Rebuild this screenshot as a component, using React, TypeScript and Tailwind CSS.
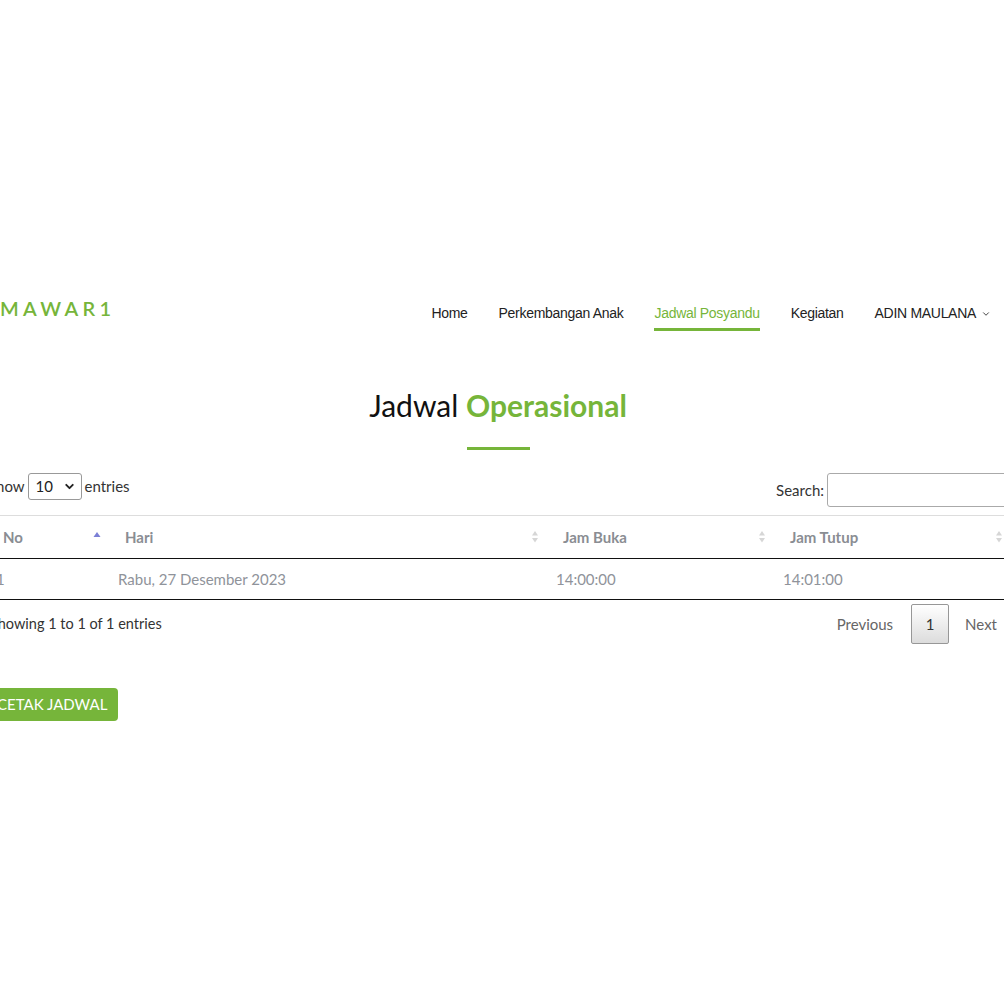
import { ChevronDown } from "lucide-react";

const navLinks = [
  { label: "Home", active: false },
  { label: "Perkembangan Anak", active: false },
  { label: "Jadwal Posyandu", active: true },
  { label: "Kegiatan", active: false },
];

type SortState = "asc" | "none";

function SortIcon({ state }: { state: SortState }) {
  if (state === "asc") {
    return (
      <svg width="8" height="14" viewBox="0 0 8 14" className="shrink-0">
        <path d="M4 2 L7.5 7 L0.5 7 Z" fill="#7b7fd6" />
      </svg>
    );
  }
  return (
    <svg width="8" height="14" viewBox="0 0 8 14" className="shrink-0">
      <path d="M4 1 L7 5.5 L1 5.5 Z" fill="#d6d6d6" />
      <path d="M4 12.5 L7 8 L1 8 Z" fill="#d6d6d6" />
    </svg>
  );
}

const columns: { label: string; width: string; sort: SortState }[] = [
  { label: "No", width: "w-[122px]", sort: "asc" },
  { label: "Hari", width: "w-[438px]", sort: "none" },
  { label: "Jam Buka", width: "w-[227px]", sort: "none" },
  { label: "Jam Tutup", width: "w-[237px]", sort: "none" },
];

const rows = [["1", "Rabu, 27 Desember 2023", "14:00:00", "14:01:00"]];

export default function App() {
  return (
    <div className="h-[1004px] w-[1004px] overflow-hidden bg-white font-['Lato',sans-serif]">
      <div className="ml-[-14px] w-[1024px]">
        {/* navbar */}
        <header className="flex items-start justify-between pt-[298px] pr-[19px]">
          <a className="ml-[14px] text-[20px] font-semibold leading-[20px] tracking-[4.3px] text-[#76b53a]">
            MAWAR1
          </a>
          <nav className="mt-[5px] flex gap-[31px] font-['Liberation_Sans',Arial,sans-serif] text-[14px] tracking-[-0.3px]">
            {navLinks.map((link) => (
              <a
                key={link.label}
                className={
                  link.active
                    ? "border-b-[3px] border-[#76b53a] pb-[5px] leading-5 text-[#76b53a]"
                    : "border-b-[3px] border-transparent pb-[5px] leading-5 text-[#222]"
                }
              >
                {link.label}
              </a>
            ))}
            <a className="flex items-start border-b-[3px] border-transparent pb-[5px] leading-5 text-[#222]">
              ADIN MAULANA
              <ChevronDown size={10} strokeWidth={2} className="ml-[5px] mt-[6px]" />
            </a>
          </nav>
        </header>

        {/* section title */}
        <div className="mt-[54px] flex flex-col items-center">
          <h2 className="text-[30px] leading-[40px] text-[#111]">
            Jadwal <span className="font-bold text-[#76b53a]">Operasional</span>
          </h2>
          <div className="mt-[22px] h-[3px] w-[63px] bg-[#76b53a]" />
        </div>

        {/* table controls */}
        <div className="mt-[23px] flex items-start justify-between text-[15px] text-[#333]">
          <label className="flex h-[27px] items-center pl-[2px]">
            Show
            <span className="mx-[3px] flex h-[27px] w-[54px] items-center justify-between rounded-[3px] border border-[#999] pl-[7px] pr-[5px] text-[#222]">
              10
              <ChevronDown size={13} strokeWidth={3.5} />
            </span>
            entries
          </label>
          <label className="flex items-center">
            Search:
            <span className="ml-[3px] block h-[34px] w-[183px] rounded-[3px] border border-[#aaa]" />
          </label>
        </div>

        {/* table */}
        <table className="mt-[8px] w-[1024px] table-fixed border-collapse text-[15px]">
          <thead>
            <tr className="border-t border-b border-t-[#ddd] border-b-[#111]">
              {columns.map((col) => (
                <th
                  key={col.label}
                  className={`${col.width} h-[43px] py-0 pl-[17px] pr-[7px] text-left font-bold text-[#8a8d93]`}
                >
                  <div className="flex items-center justify-between">
                    <span>{col.label}</span>
                    <SortIcon state={col.sort} />
                  </div>
                </th>
              ))}
            </tr>
          </thead>
          <tbody>
            {rows.map((row) => (
              <tr key={row[0]} className="border-b border-[#111]">
                {row.map((cell, i) => (
                  <td key={i} className="h-[41px] px-[10px] py-0 text-[#8f939a]">
                    {cell}
                  </td>
                ))}
              </tr>
            ))}
          </tbody>
        </table>

        {/* footer */}
        <div className="flex items-center justify-between pt-[4px] text-[#333]">
          <p className="pl-[4px] text-[14.5px]">Showing 1 to 1 of 1 entries</p>
          <div className="flex items-center gap-[3px] text-[15px]">
            <span className="px-[15px] py-[8px] text-[#666]">Previous</span>
            <span className="flex h-[40px] w-[38px] items-center justify-center rounded-[2px] border border-[#979797] bg-gradient-to-b from-white to-[#dcdcdc] text-[#333]">
              1
            </span>
            <span className="px-[13px] py-[8px] text-[#666]">Next</span>
          </div>
        </div>

        <button className="mt-[44px] h-[33px] rounded-[4px] bg-[#76b53a] px-[11px] text-[15px] text-white">
          CETAK JADWAL
        </button>
      </div>
    </div>
  );
}
